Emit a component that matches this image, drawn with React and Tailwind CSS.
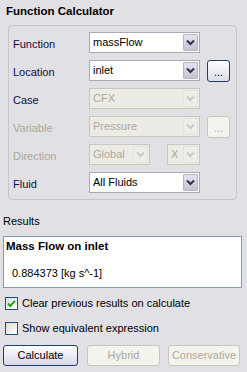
import React from "react";

const font = { fontFamily: '"Liberation Sans", Arial, sans-serif' };

function Chevron({ disabled }) {
  return (
    <svg width="9" height="7" viewBox="0 0 9 7">
      <path d="M1 1.5 L4.5 5 L8 1.5" fill="none" stroke={disabled ? "#c9c8cf" : "#2d2f52"} strokeWidth="2" />
    </svg>
  );
}

function Combo({ value, width, disabled }) {
  return (
    <div
      className={`flex h-[21px] items-stretch border p-px ${disabled ? "border-[#c9c7ba] bg-[#ecebe5]" : "border-[#a5acb5] bg-white"}`}
      style={{ width }}
    >
      <div className={`flex flex-1 items-center pl-[2px] text-[11px] ${disabled ? "text-[#aca899]" : "text-black"}`}>{value}</div>
      <div
        className={`flex w-[15px] items-center justify-center rounded-[1px] border ${disabled ? "border-[#e3e2dc] bg-[#eeede9]" : "border-[#b5b7c4] bg-gradient-to-b from-[#e6e5ee] to-[#c4c3d3]"}`}
      >
        <Chevron disabled={disabled} />
      </div>
    </div>
  );
}

function Dots({ disabled }) {
  return (
    <div
      className={`ml-[7px] flex h-[22px] w-[23px] items-end justify-center rounded-[3px] border pb-[3px] text-[11px] leading-none ${disabled ? "border-[#c9c7ba] bg-[#f4f3ee] text-[#aca899]" : "border-[#1f3f6d] bg-gradient-to-b from-white to-[#dcdbe8] text-black"}`}
    >
      ...
    </div>
  );
}

function Row({ label, disabled, children }) {
  return (
    <div className="flex h-[21px] items-center">
      <div className={`w-[76px] pt-[3px] text-[11px] ${disabled ? "text-[#aca899]" : "text-[#10103a]"}`}>{label}</div>
      {children}
    </div>
  );
}

function Check({ checked, label }) {
  return (
    <div className="flex h-[13px] items-center pl-[5px]">
      <div className="flex h-[13px] w-[13px] items-center justify-center border border-[#1c5180] bg-gradient-to-br from-[#dcdcd7] to-white">
        {checked && (
          <svg width="9" height="9" viewBox="0 0 9 9">
            <path d="M1 4.5 L3.3 7 L8 1.8" fill="none" stroke="#21a121" strokeWidth="2" />
          </svg>
        )}
      </div>
      <span className="ml-[4px] text-[11px] text-black">{label}</span>
    </div>
  );
}

export default function App() {
  return (
    <div className="flex h-[372px] w-[247px] flex-col bg-[#e1e0e4]" style={font}>
      <div className="h-[21px] pl-[6px] pt-[3px] text-[11.5px] font-bold text-black">Function Calculator</div>
      <div className="ml-[8px] mt-[4px] flex h-[175px] w-[229px] flex-col gap-[7px] rounded-[4px] border border-[#c5c4c9] pl-[4px] pt-[6px]">
        <Row label="Function">
          <Combo value="massFlow" width={111} />
        </Row>
        <Row label="Location">
          <Combo value="inlet" width={111} />
          <Dots />
        </Row>
        <Row label="Case">
          <Combo value="CFX" width={111} disabled />
        </Row>
        <Row label="Variable" disabled>
          <Combo value="Pressure" width={111} disabled />
          <Dots disabled />
        </Row>
        <Row label="Direction" disabled>
          <Combo value="Global" width={61} disabled />
          <div className="w-[17px]" />
          <Combo value="X" width={33} disabled />
        </Row>
        <Row label="Fluid">
          <Combo value="All Fluids" width={111} />
        </Row>
      </div>
      <div className="mt-[13px] pl-[3px] text-[11px] text-black">Results</div>
      <div className="ml-[3px] mt-[6px] flex h-[52px] w-[239px] flex-col border border-[#7f9db9] bg-white">
        <div className="pl-[2px] pt-px text-[11.5px] font-bold text-black">Mass Flow on inlet</div>
        <div className="mt-[10px] pl-[8px] text-[11px] text-black">0.884373 [kg s^-1]</div>
      </div>
      <div className="mt-[9px] flex flex-col gap-[12px]">
        <Check checked label="Clear previous results on calculate" />
        <Check label="Show equivalent expression" />
      </div>
      <div className="mt-[10px] flex pl-[3px]">
        <div className="flex h-[21px] w-[75px] items-center justify-center rounded-[3px] border border-[#1f3f6d] bg-gradient-to-b from-white to-[#d8d7e6] text-[11px] text-black">
          Calculate
        </div>
        <div className="ml-[9px] flex h-[21px] w-[73px] items-center justify-center rounded-[3px] border border-[#c9c7ba] bg-[#f4f3ee] text-[11px] text-[#aca899]">
          Hybrid
        </div>
        <div className="ml-[8px] flex h-[21px] w-[72px] items-center justify-center rounded-[3px] border border-[#c9c7ba] bg-[#f4f3ee] text-[11px] text-[#aca899]">
          Conservative
        </div>
      </div>
    </div>
  );
}
